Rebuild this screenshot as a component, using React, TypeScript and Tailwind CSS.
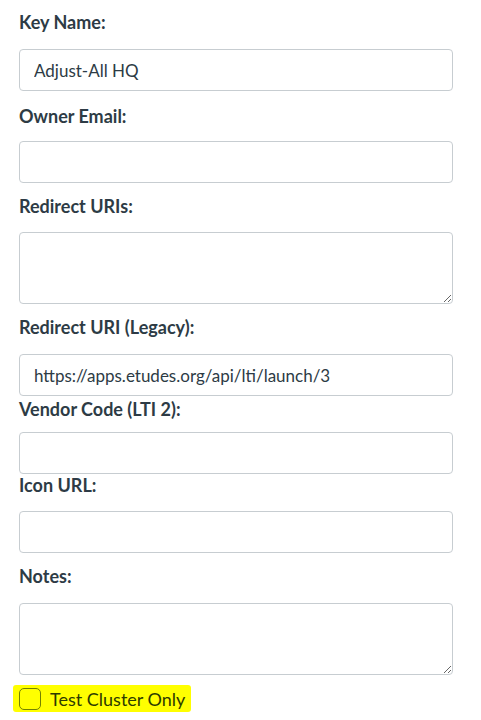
import React from "react";

const font = { fontFamily: "Lato, 'Noto Sans', sans-serif" };

function Label({ children, cls }: { children: React.ReactNode; cls: string }) {
  return (
    <label className={`block text-[18px] leading-[22px] font-bold text-[#2d3b45] ${cls}`}>{children}</label>
  );
}

function Input({ value, cls }: { value?: string; cls: string }) {
  return (
    <input
      type="text"
      defaultValue={value}
      className={`block w-[434px] h-[42px] border border-[#c7cdd1] rounded-[4px] bg-white px-[14px] text-[17px] text-[#2d3b45] outline-none ${cls}`}
      style={font}
    />
  );
}

function Area({ cls }: { cls: string }) {
  return (
    <textarea
      className={`block w-[434px] h-[72px] border border-[#c7cdd1] rounded-[4px] bg-white px-[14px] py-2 text-[17px] text-[#2d3b45] outline-none ${cls}`}
      style={font}
    />
  );
}

export default function App() {
  return (
    <div className="min-h-[720px] w-[481px] bg-white pl-[19px] pt-[11px]" style={font}>
      <Label cls="">Key Name:</Label>
      <Input value="Adjust-All HQ" cls="mt-[16px]" />
      <Label cls="mt-[14px]">Owner Email:</Label>
      <Input cls="mt-[14px]" />
      <Label cls="mt-[12px]">Redirect URIs:</Label>
      <Area cls="mt-[15px]" />
      <Label cls="mt-[12px]">Redirect URI (Legacy):</Label>
      <Input value="https://apps.etudes.org/api/lti/launch/3" cls="mt-[16px]" />
      <Label cls="mt-[2px]">Vendor Code (LTI 2):</Label>
      <Input cls="mt-[12px]" />
      <Label cls="mt-[0px]">Icon URL:</Label>
      <Input cls="mt-[15px]" />
      <Label cls="mt-[12px]">Notes:</Label>
      <Area cls="mt-[16px]" />
      <div className="relative mt-[10px] -ml-[6px] inline-flex items-center gap-[9px] bg-[#ffff00] pl-[6px] pr-[6px] h-[27px] rounded-[3px]">
        <span className="block w-[22px] h-[22px] rounded-[5px] border border-[#738100] bg-[#ffff00]" />
        <span className="text-[18px] leading-[20px] text-[#2d3b00]">Test Cluster Only</span>
      </div>
    </div>
  );
}
